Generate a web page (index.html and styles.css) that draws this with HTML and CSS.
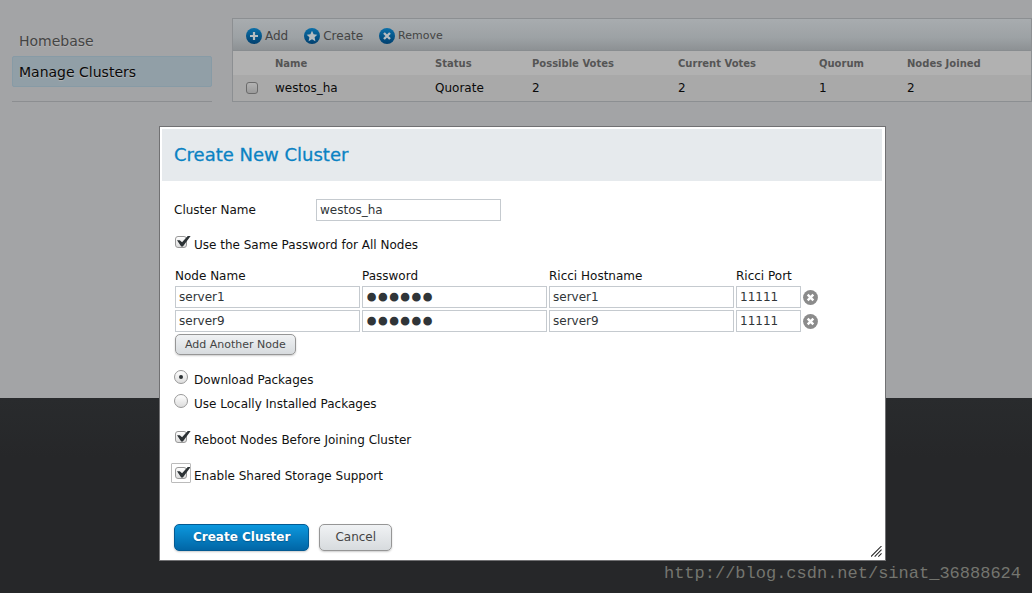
FILE: index.html
```html
<!DOCTYPE html>
<html lang="en">
<head>
<meta charset="utf-8">
<title>Manage Clusters</title>
<link rel="stylesheet" href="styles.css">
</head>
<body>
<svg class="defs" aria-hidden="true">
  <defs>
    <linearGradient id="blue" x1="0" y1="0" x2="0" y2="1"><stop offset="0" stop-color="#0b6fa8"/><stop offset="1" stop-color="#01406f"/></linearGradient>
  </defs>
  <symbol id="cross" viewBox="0 0 16 16"><circle cx="8" cy="8" r="7.9" fill="#8b8b8b"/><path d="M5 5l6 6M11 5l-6 6" stroke="#fff" stroke-width="2.6"/></symbol>
</svg>
<div class="page">
  <nav class="menu">
    <a href="#">Homebase</a>
    <a href="#" class="current">Manage Clusters</a>
  </nav>
  <main class="panel">
    <div class="toolbar">
      <button type="button"><svg viewBox="0 0 16 16"><circle cx="8" cy="8" r="8" fill="url(#blue)"/><path d="M8 4v8M4 8h8" stroke="#b5bcc0" stroke-width="2.2"/></svg>Add</button>
      <button type="button"><svg viewBox="0 0 16 16"><circle cx="8" cy="8" r="8" fill="url(#blue)"/><path d="M8 2.800l1.600 3.500 3.700.4-2.700 2.600.8 3.900L8 11.300l-3.400 1.900.8-3.900L2.700 6.700l3.700-.4z" fill="#b5bcc0"/></svg>Create</button>
      <button type="button" class="small"><svg viewBox="0 0 16 16"><circle cx="8" cy="8" r="8" fill="url(#blue)"/><path d="M5 5l6 6M11 5l-6 6" stroke="#b5bcc0" stroke-width="2.4"/></svg>Remove</button>
    </div>
    <table class="clusters">
      <colgroup><col class="c-check"><col class="c-name"><col class="c-status"><col class="c-possible"><col class="c-current"><col class="c-quorum"><col></colgroup>
      <thead><tr><th></th><th>Name</th><th>Status</th><th>Possible Votes</th><th>Current Votes</th><th>Quorum</th><th>Nodes Joined</th></tr></thead>
      <tbody><tr><td><input type="checkbox" class="check" aria-label="Select westos_ha"></td><td>westos_ha</td><td>Quorate</td><td>2</td><td>2</td><td>1</td><td>2</td></tr></tbody>
    </table>
  </main>
</div>
<footer class="footer"></footer>

<form class="dialog" role="dialog" aria-labelledby="title">
  <header><h1 id="title">Create New Cluster</h1></header>
  <div class="content">
    <div class="name-row">
      <label for="cluster">Cluster Name</label>
      <input id="cluster" class="field" type="text" value="westos_ha">
    </div>
    <label class="option"><input class="check" type="checkbox" checked><span>Use the Same Password for All Nodes</span></label>
    <table class="nodes">
      <thead><tr><th>Node Name</th><th>Password</th><th>Ricci Hostname</th><th>Ricci Port</th><th></th></tr></thead>
      <tbody>
        <tr>
          <td><input class="field" type="text" value="server1" aria-label="Node name"></td>
          <td><input class="field" type="password" value="secret" aria-label="Password"></td>
          <td><input class="field" type="text" value="server1" aria-label="Ricci hostname"></td>
          <td><input class="field port" type="text" value="11111" aria-label="Ricci port"></td>
          <td><button type="button" class="delete" aria-label="Remove node"><svg><use href="#cross"/></svg></button></td>
        </tr>
        <tr>
          <td><input class="field" type="text" value="server9" aria-label="Node name"></td>
          <td><input class="field" type="password" value="secret" aria-label="Password"></td>
          <td><input class="field" type="text" value="server9" aria-label="Ricci hostname"></td>
          <td><input class="field port" type="text" value="11111" aria-label="Ricci port"></td>
          <td><button type="button" class="delete" aria-label="Remove node"><svg><use href="#cross"/></svg></button></td>
        </tr>
      </tbody>
    </table>
    <button type="button" class="btn add-node">Add Another Node</button>
    <div class="radios">
      <label class="option"><input class="radio" type="radio" name="packages" checked><span>Download Packages</span></label>
      <label class="option"><input class="radio" type="radio" name="packages"><span>Use Locally Installed Packages</span></label>
    </div>
    <label class="option spaced"><input class="check" type="checkbox" checked><span>Reboot Nodes Before Joining Cluster</span></label>
    <label class="option spaced"><input class="check focused" type="checkbox" checked><span>Enable Shared Storage Support</span></label>
    <div class="actions">
      <button type="button" class="btn primary">Create Cluster</button>
      <button type="button" class="btn cancel">Cancel</button>
    </div>
  </div>
  <svg class="grip" viewBox="0 0 12 12" aria-hidden="true"><path d="M0 11.500L11.500 0M4 11.500L11.500 4M8 11.500L11.500 8" stroke="#222" stroke-width="1.100"/></svg>
</form>
<div class="watermark">http://blog.csdn.net/sinat_36888624</div>
</body>
</html>
```

FILE: styles.css
```css
* { box-sizing: border-box; }

body {
  margin: 0;
  min-height: 100vh;
  display: flex;
  flex-direction: column;
  position: relative;
  background: #262729;
  font: 12px/16px "DejaVu Sans", sans-serif;
  color: #111;
}

button, input { font: inherit; }
.defs { position: absolute; width: 0; height: 0; }

.page {
  min-height: 398px;
  padding: 18px 0 0 12px;
  display: flex;
  align-items: flex-start;
  gap: 20px;
  background: #a3a4a6;
}

.footer {
  flex: 1;
  background: linear-gradient(#292b2d, #262729 60px);
}

.menu {
  width: 200px;
  padding: 7px 0 14px;
  border-bottom: 1px solid #8c8e91;
}

.menu a {
  display: block;
  height: 31px;
  padding: 0 6px;
  border: 1px solid transparent;
  border-radius: 2px;
  font-size: 14px;
  line-height: 30px;
  color: #444;
  text-decoration: none;
  text-shadow: 0 1px 1px #b5b5b5;
}

.menu a.current {
  background: #919fa7;
  border-color: #879ba6;
  color: #0a0a0a;
}

.panel {
  flex: 1;
  border: 1px solid #8c8f92;
}

.toolbar {
  height: 32px;
  padding: 2px 0 0 13px;
  display: flex;
  align-items: center;
  gap: 16px;
  background: linear-gradient(#a8acaf, #9da2a5 60%, #8d9194);
  border-bottom: 1px solid #898d90;
}

.toolbar button {
  display: flex;
  align-items: center;
  gap: 3px;
  padding: 0;
  border: 0;
  background: none;
  color: #444;
}

.toolbar svg { width: 16px; height: 16px; }
.toolbar .small { font-size: 11px; }

.clusters {
  width: 100%;
  table-layout: fixed;
  border-collapse: collapse;
  background: #a9a9a9;
  color: #0a0a0a;
}

.clusters th, .clusters td { padding: 0; text-align: left; }
.clusters th { height: 24px; padding-top: 2px; font-size: 10px; background: #b1b1b1; color: #555; }
.clusters td { height: 26px; }
.clusters td:first-child { padding-left: 13px; }
.clusters .check { display: block; filter: brightness(70%); }
.c-check { width: 42px; }
.c-name { width: 160px; }
.c-status { width: 97px; }
.c-possible { width: 146px; }
.c-current { width: 141px; }
.c-quorum { width: 88px; }

.dialog {
  position: absolute;
  left: 159px;
  top: 126px;
  width: 727px;
  padding: 2px;
  background: #fff;
  border: 1px solid #717173;
}

.dialog header {
  height: 52px;
  margin-right: 1px;
  padding: 0 12px;
  display: flex;
  align-items: center;
  background: #e6eaed;
}

h1 {
  margin: 0;
  font-size: 18px;
  line-height: 24px;
  font-weight: 400;
  color: #0a82c3;
  -webkit-text-stroke: 0.3px #0a82c3;
}

.content {
  padding: 18px 12px 7px;
  display: flex;
  flex-direction: column;
  align-items: flex-start;
}

.name-row { display: flex; align-items: center; }
.name-row label { width: 142px; }

.field {
  display: block;
  width: 185px;
  height: 22px;
  padding: 0 3px;
  border: 1px solid #c5cacf;
  background: #fff;
  color: #303538;
}

.field.port { width: 65px; }

.field[type="password"] {
  font-size: 19px;
  -webkit-text-stroke: 3px #303538;
}

.option {
  height: 24px;
  display: flex;
  align-items: center;
  gap: 6px;
}

.name-row + .option { margin-top: 11px; }
.option input { margin-bottom: 5px; }
.option span { padding-top: 2px; }

.check, .radio {
  appearance: none;
  position: relative;
  width: 12px;
  height: 12px;
  margin: 0;
  border: 1px solid #999;
  border-radius: 3px;
  background: linear-gradient(#fff, #ddd);
}

.option .check { margin-left: 1px; margin-right: 1px; }

.check:checked::before {
  content: "";
  position: absolute;
  left: 1px;
  top: -1px;
  width: 14px;
  height: 11px;
  background: #2d3336;
  clip-path: polygon(0 44%, 20% 44%, 36% 62%, 80% 0, 100% 0, 42% 100%, 30% 100%);
}

.check.focused::after {
  content: "";
  position: absolute;
  inset: -5px;
  border: 1px solid #bbb;
  border-radius: 1px;
}

.radio {
  width: 14px;
  height: 14px;
  border-radius: 50%;
}

.radio:checked::before {
  content: "";
  position: absolute;
  left: 4px;
  top: 4px;
  width: 4px;
  height: 4px;
  border-radius: 50%;
  background: #2d3336;
}

.nodes {
  margin: 10px 0 0 -1px;
  border-spacing: 2px;
}

.nodes th, .nodes td { padding: 0; text-align: left; font-weight: 400; }
.nodes th { height: 16px; }

.delete {
  display: block;
  width: 15px;
  height: 15px;
  padding: 0;
  border: 0;
  background: none;
}

.delete svg { display: block; width: 15px; height: 15px; }

.btn {
  border: 1px solid #969696;
  border-radius: 5px;
  background: linear-gradient(#f0f2f4, #d7dbde);
  color: #444;
  box-shadow: 0 1px 2px #ccc;
}

.add-node {
  height: 21px;
  margin-left: 1px;
  padding: 0 9px;
  font-size: 11px;
  line-height: 16px;
}

.radios { margin-top: 12px; }
.spaced { margin-top: 12px; }

.actions {
  margin-top: 37px;
  display: flex;
  gap: 10px;
}

.actions .btn { height: 27px; padding: 0 15px 2px; }

.actions .primary {
  padding: 0 18px 2px;
  border-color: #045a92;
  background: linear-gradient(#0c98de, #0166a6);
  color: #fff;
  font-weight: 700;
  text-shadow: 0 1px 1px #045a92;
}

.grip {
  position: absolute;
  right: 3px;
  bottom: 3px;
  width: 11px;
  height: 11px;
}

.watermark {
  position: absolute;
  right: 11px;
  bottom: 8px;
  font: 17px/22px "Liberation Mono", monospace;
  color: #74756f;
}
```
